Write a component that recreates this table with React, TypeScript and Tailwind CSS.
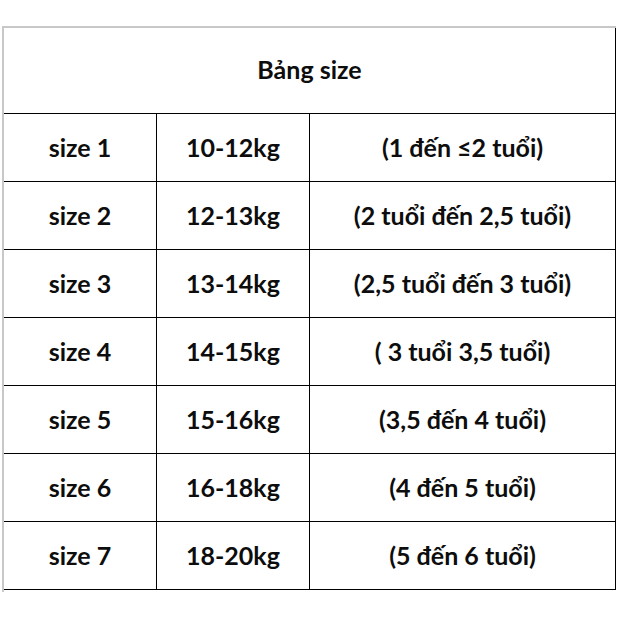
const ROWS = [
  ["size 1", "10-12kg", "(1 đến ≤2 tuổi)"],
  ["size 2", "12-13kg", "(2 tuổi đến 2,5 tuổi)"],
  ["size 3", "13-14kg", "(2,5 tuổi đến 3 tuổi)"],
  ["size 4", "14-15kg", "( 3 tuổi 3,5 tuổi)"],
  ["size 5", "15-16kg", "(3,5 đến 4 tuổi)"],
  ["size 6", "16-18kg", "(4 đến 5 tuổi)"],
  ["size 7", "18-20kg", "(5 đến 6 tuổi)"],
];

export default function App() {
  return (
    <div className="w-[617px] h-[617px] bg-white pt-[26px] pl-[2px] font-['Lato','Noto_Sans',sans-serif] font-bold text-[25px] text-[#0d0d0d]">
      <div className="w-[614px] border-l-2 border-t-2 border-[#c8c8c8] pb-[2px]">
        <div className="h-[86px] flex items-center justify-center border-r border-b border-black pb-[2px]">
          Bảng size
        </div>
        {ROWS.map((row) => (
          <div key={row[0]} className="grid grid-cols-[153px_153px_306px]">
            {row.map((cell, i) => (
              <div
                key={i}
                className="h-[68px] flex items-center justify-center border-r border-b border-black pt-[1px]"
              >
                {cell}
              </div>
            ))}
          </div>
        ))}
      </div>
    </div>
  );
}
